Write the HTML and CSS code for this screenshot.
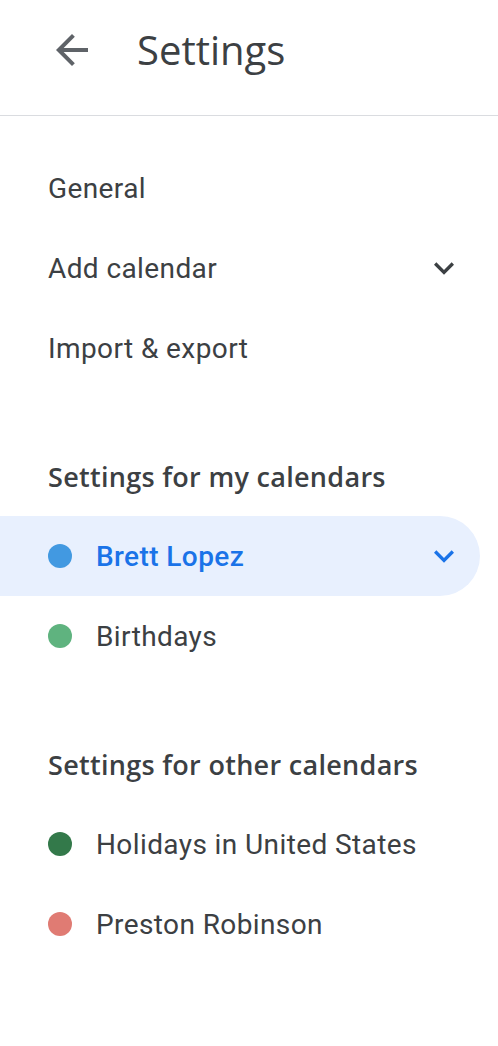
FILE: index.html
```html
<!DOCTYPE html>
<html lang="en">
<head>
    <meta charset="UTF-8">
    <meta name="viewport" content="width=device-width, initial-scale=1.0">
    <title>Settings</title>
    <link rel="stylesheet" href="styles.css">
</head>
<body>
    <header class="topbar">
        <button class="back-btn" aria-label="Back">
            <svg width="48" height="48" viewBox="0 0 24 24"><path d="M20 11H7.83l5.59-5.59L12 4l-8 8 8 8 1.41-1.41L7.83 13H20v-2z" fill="#5f6368"/></svg>
        </button>
        <h1 class="title">Settings</h1>
    </header>

    <nav class="menu">
        <div class="item">General</div>
        <div class="item">
            <span class="label">Add calendar</span>
            <svg class="chevron" width="40" height="40" viewBox="0 0 24 24"><path d="M16.59 8.59L12 13.17 7.41 8.59 6 10l6 6 6-6z" fill="#3c4043"/></svg>
        </div>
        <div class="item">Import &amp; export</div>

        <h2 class="section-title">Settings for my calendars</h2>
        <div class="item cal active">
            <span class="dot dot-blue"></span>
            <span class="label">Brett Lopez</span>
            <svg class="chevron" width="40" height="40" viewBox="0 0 24 24"><path d="M16.59 8.59L12 13.17 7.41 8.59 6 10l6 6 6-6z" fill="#1a73e8"/></svg>
        </div>
        <div class="item cal">
            <span class="dot dot-green"></span>
            <span class="label">Birthdays</span>
        </div>

        <h2 class="section-title">Settings for other calendars</h2>
        <div class="item cal">
            <span class="dot dot-dark"></span>
            <span class="label">Holidays in United States</span>
        </div>
        <div class="item cal">
            <span class="dot dot-red"></span>
            <span class="label">Preston Robinson</span>
        </div>
    </nav>
</body>
</html>
```

FILE: styles.css
```css
body {
    margin: 0;
    font-family: Roboto, Arial, sans-serif;
    color: #3c4043;
    background-color: #fff;
}

.topbar {
    display: flex;
    align-items: center;
    height: 115px;
    padding-left: 48px;
    border-bottom: 1px solid #dadce0;
}

.back-btn {
    width: 48px;
    height: 48px;
    padding: 0;
    border: none;
    background: none;
    margin-top: -16px;
}

.back-btn svg {
    display: block;
}

.title {
    margin: 0 0 0 41px;
    margin-top: -16px;
    font-family: "Open Sans", Roboto, sans-serif;
    font-size: 40px;
    font-weight: 400;
    color: #3c4043;
}

.menu {
    padding-top: 32px;
}

.item {
    display: flex;
    align-items: center;
    height: 80px;
    padding-left: 48px;
    padding-right: 34px;
    font-size: 28px;
    letter-spacing: 0.4px;
}

.item .label {
    flex: 1;
}

.chevron {
    display: block;
}

.section-title {
    display: flex;
    align-items: center;
    height: 80px;
    margin: 48px 0 0;
    padding-left: 48px;
    font-family: "Open Sans", Roboto, sans-serif;
    font-size: 27px;
    font-weight: 600;
    letter-spacing: 0.3px;
    color: #3c4043;
}

.cal {
    gap: 24px;
}

.active {
    width: 480px;
    box-sizing: border-box;
    padding-right: 16px;
    background-color: #e8f0fe;
    border-radius: 0 40px 40px 0;
    color: #1a73e8;
    font-weight: 500;
}

.dot {
    width: 24px;
    height: 24px;
    border-radius: 50%;
}

.dot-blue { background-color: #4299e1; }
.dot-green { background-color: #5fb37f; }
.dot-dark { background-color: #33794a; }
.dot-red { background-color: #e07b73; }
```
